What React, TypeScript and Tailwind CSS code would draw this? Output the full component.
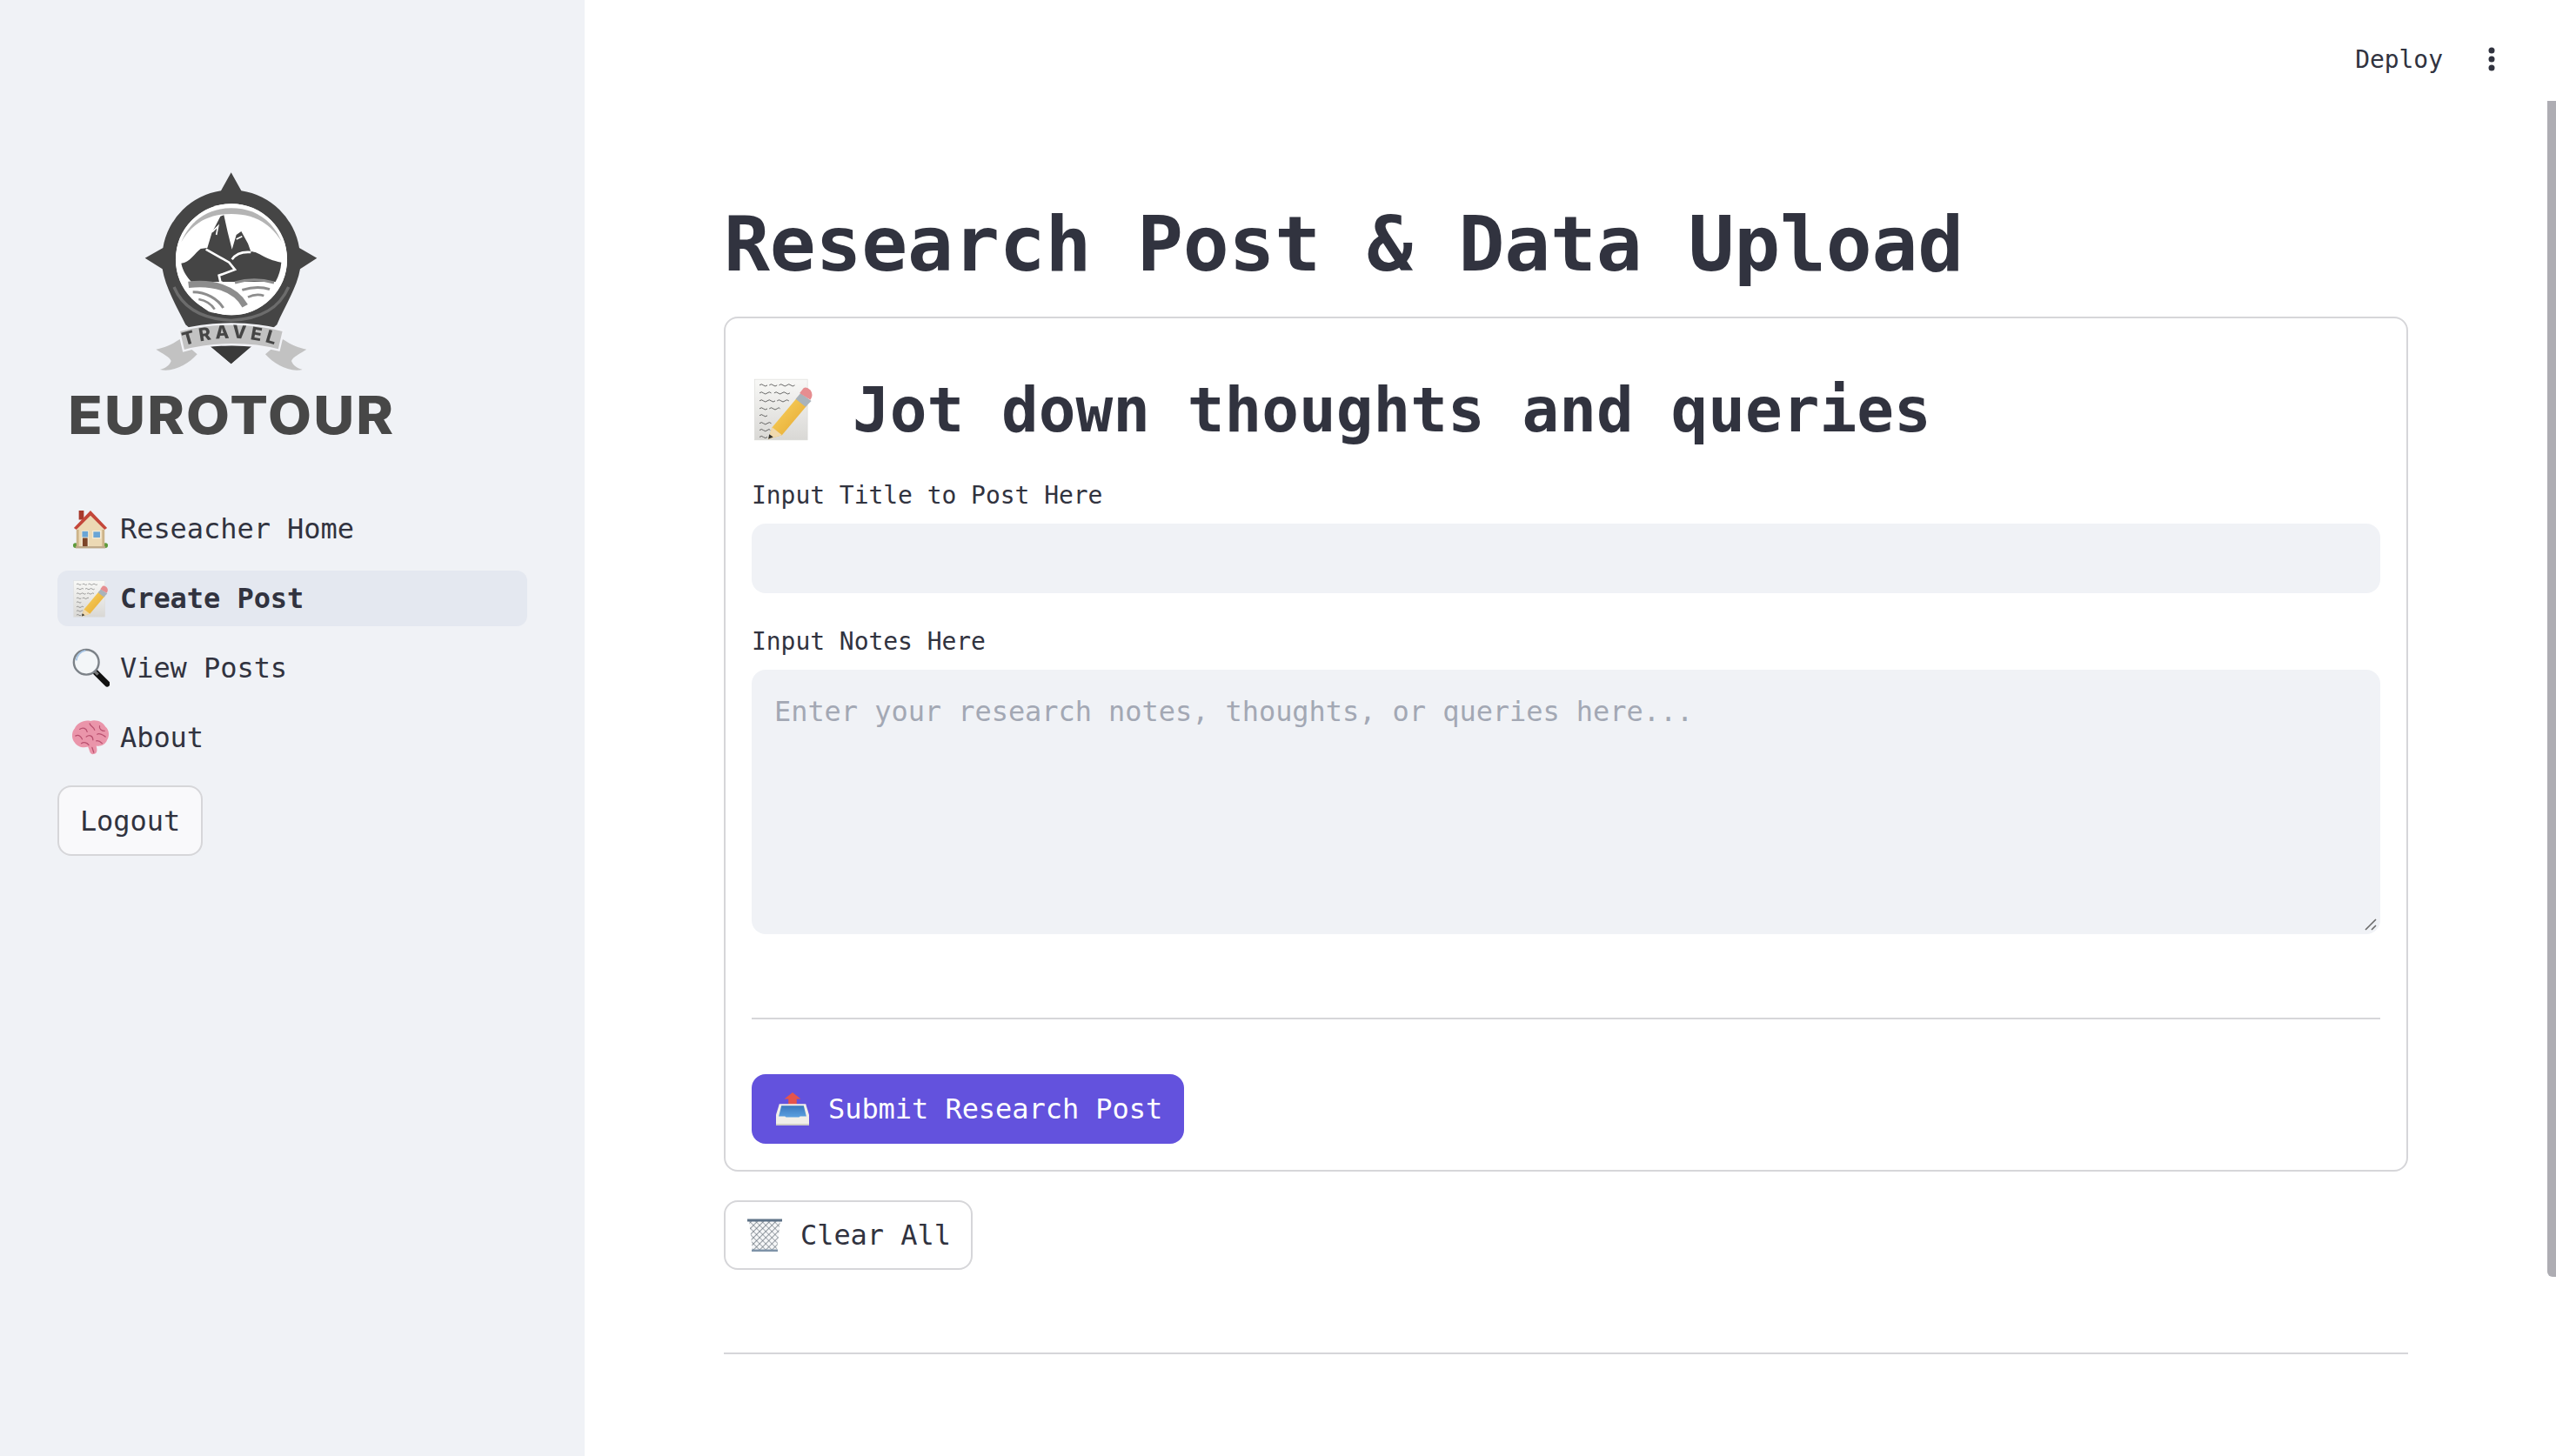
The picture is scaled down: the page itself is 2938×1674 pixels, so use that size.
import React from 'react';

function HouseEmoji({ className }: { className?: string }) {
  return (
    <svg viewBox="0 0 44 48" className={className}>
      <rect x="8" y="2" width="6" height="11" fill="#a8392c" />
      <circle cx="4" cy="44" r="3" fill="#5c9a3a" />
      <circle cx="40" cy="44" r="3" fill="#5c9a3a" />
      <path d="M6 23 L22 7 L38 23 V46 H6 Z" fill="#ecd9b4" />
      <path d="M2 23 L22 2 L42 23 L39 25 L22 8 L5 25 Z" fill="#c4473a" />
      <rect x="5" y="25" width="3" height="20" fill="#cdb48a" />
      <rect x="36" y="25" width="3" height="20" fill="#cdb48a" />
      <rect x="11" y="26" width="9" height="20" fill="#f4ead4" />
      <rect x="12" y="27" width="7" height="7" fill="#6aa5d6" />
      <rect x="12.5" y="35" width="6" height="11" fill="#7d4528" />
      <rect x="24" y="26" width="11" height="10" fill="#f4ead4" />
      <rect x="25.5" y="27.5" width="8" height="7" fill="#6aa5d6" />
      <rect x="4" y="45" width="36" height="2.5" fill="#bfa988" />
    </svg>
  );
}

function MemoEmoji({ className }: { className?: string }) {
  return (
    <svg viewBox="0 0 60 64" className={className}>
      <defs>
        <linearGradient id="memoPage" x1="0" y1="0" x2="0" y2="1">
          <stop offset="0" stopColor="#f8f8f6" />
          <stop offset="1" stopColor="#d9d8d5" />
        </linearGradient>
        <linearGradient id="memoPencil" x1="0" y1="0" x2="1" y2="1">
          <stop offset="0" stopColor="#fbd866" />
          <stop offset="1" stopColor="#e3a32b" />
        </linearGradient>
      </defs>
      <rect x="1" y="1" width="54" height="62" fill="url(#memoPage)" stroke="#d8d8d4" strokeWidth="0.5" />
      <g stroke="#3d3d3d" strokeWidth="0.8" fill="none" opacity="0.85">
        <path d="M6 7 q2 -2 4 0 t4 0 m2 0 q2 -2 4 0 t4 0 m2 0 q2 -2 4 0 t4 0 t4 0 t4 0" />
        <path d="M6 15 q2 -2 4 0 t4 0 t4 0 m3 0 q2 -2 4 0 t4 0 t4 0 t4 0" />
        <path d="M6 23 q2 -2 4 0 t4 0 t4 0 t4 0 m2 0 q2 -2 4 0 t4 0 t4 0" />
        <path d="M6 31 q2 -2 4 0 t4 0 m2 0 q2 -2 4 0 t4 0 t3 0" />
        <path d="M6 38 q2 -2 4 0 t4 0" />
        <path d="M6 46 q2 -2 4 0 t4 0 t4 0" />
        <path d="M6 53 q2 -2 4 0 t4 0 t3 0" />
        <path d="M6 60 q2 -2 4 0 t4 0" />
      </g>
      <path d="M15 62 L19 50 L45 19 L55 27 L29 58 Z" fill="url(#memoPencil)" />
      <path d="M15 62 L19 50 L29 58 Z" fill="#f0d9ae" />
      <path d="M15 62 L16 57 L20 60 Z" fill="#333" />
      <path d="M43 21 L48 15 L59 23 L53 29 Z" fill="#a9b3ba" />
      <path d="M47 15 L51 10 Q54 8 58 12 Q61 16 59 20 L58 22 Z" fill="#e68d90" />
    </svg>
  );
}

function SearchEmoji({ className }: { className?: string }) {
  return (
    <svg viewBox="0 0 46 50" className={className}>
      <path d="M28 29 L43 44" stroke="#111" strokeWidth="7" strokeLinecap="round" />
      <path d="M26 27 L32 33" stroke="#777" strokeWidth="3.5" />
      <circle cx="18" cy="18" r="15" fill="#f3f6f8" stroke="#7c8288" strokeWidth="2.5" />
      <path d="M6 16 A13 13 0 0 1 17 4" stroke="#a7c6e6" strokeWidth="2" fill="none" />
    </svg>
  );
}

function BrainEmoji({ className }: { className?: string }) {
  return (
    <svg viewBox="0 0 46 44" className={className}>
      <path d="M23 2 C30 0 38 3 41 9 C46 13 46 21 43 25 C41 31 35 33 30 32 C31 36 32 41 27 42 C22 43 22 37 20 33 C14 35 7 33 4 28 C0 24 0 15 4 11 C7 4 16 0 23 2 Z" fill="#ea95aa" />
      <g stroke="#b9506f" strokeWidth="1.3" fill="none" strokeLinecap="round">
        <path d="M10 12 C14 9 18 11 19 15" />
        <path d="M22 5 C23 9 27 9 28 13" />
        <path d="M34 8 C33 12 37 14 40 14" />
        <path d="M5 20 C9 18 12 21 13 24" />
        <path d="M18 21 C22 18 26 20 26 25" />
        <path d="M31 18 C34 16 38 19 41 21" />
        <path d="M12 29 C15 27 19 28 21 31" />
        <path d="M30 26 C33 25 35 27 37 29" />
        <path d="M25 34 L27 40" />
      </g>
    </svg>
  );
}

function OutboxEmoji({ className }: { className?: string }) {
  return (
    <svg viewBox="0 0 40 40" className={className}>
      <defs>
        <linearGradient id="outboxTray" x1="0" y1="0" x2="0" y2="1">
          <stop offset="0" stopColor="#3a78bd" />
          <stop offset="1" stopColor="#5aa0e0" />
        </linearGradient>
      </defs>
      <path d="M20 0 L30 8 H25 V16 H15 V8 H10 Z" fill="#e5544b" />
      <path d="M4 14 H36 L40 27 V40 H0 V27 Z" fill="#f1efe9" />
      <path d="M6.5 16 H33.5 L37 30 H3 Z" fill="url(#outboxTray)" />
      <path d="M0 29 H11 C14 35 26 35 29 29 H40 V40 H0 Z" fill="#f1efe9" />
      <rect x="0" y="38" width="40" height="2" fill="#cfcdc6" />
    </svg>
  );
}

function TrashEmoji({ className }: { className?: string }) {
  return (
    <svg viewBox="0 0 40 38" className={className}>
      <defs>
        <pattern id="trashMesh" width="5" height="5" patternUnits="userSpaceOnUse" patternTransform="rotate(45)">
          <path d="M0 0H5M0 0V5" stroke="#55606b" strokeWidth="1.2" fill="none" />
        </pattern>
      </defs>
      <path d="M2 2 H38 L34 37 H6 Z" fill="#f6f7f8" />
      <path d="M2 2 H38 L34 37 H6 Z" fill="url(#trashMesh)" />
      <rect x="0" y="0.5" width="40" height="3" fill="#5f7388" />
      <rect x="5" y="35.5" width="30" height="2.5" fill="#7e93a8" />
    </svg>
  );
}

function Logo() {
  return (
    <svg viewBox="0 0 1380 1080" className="w-[460px] h-[360px] ml-[40px] shrink-0 blur-[0.6px]">
      {/* compass pin */}
      <path
        d="M677 85 L712 148 A238 238 0 0 1 912 345 L973 380 L915 418 C905 480 860 550 835 610 L677 745 L520 610 C490 550 450 480 440 418 L380 380 L442 345 A238 238 0 0 1 642 148 Z"
        fill="#454545"
      />
      <path d="M480 480 C510 550 570 590 677 595 C785 590 845 550 875 480" stroke="#6c6c6c" strokeWidth="10" fill="none" />
      <circle cx="678" cy="385" r="192" fill="#ffffff" />
      <path d="M505 325 C540 240 610 208 678 208 C750 208 815 240 852 325 C810 255 750 228 678 228 C605 228 545 255 505 325 Z" fill="#b4b4b4" />
      {/* mountains */}
      <path
        d="M505 398 C535 395 550 365 572 348 L595 345 L610 295 L640 236 L652 232 L665 290 L680 350 L695 300 L712 288 L735 330 L745 358 C775 358 790 385 850 395 C848 420 842 440 830 462 L540 462 C525 445 510 425 505 398 Z"
        fill="#454545"
      />
      <path d="M612 290 L632 270 L626 300" stroke="#ffffff" strokeWidth="5" fill="none" />
      <path d="M695 315 L715 305" stroke="#ffffff" strokeWidth="5" fill="none" />
      {/* river */}
      <path d="M590 350 L670 395 L690 420 L635 440 L640 462 L660 472 M680 385 C695 362 720 358 745 360" stroke="#ffffff" strokeWidth="8" fill="none" />
      {/* fields */}
      <path d="M530 462 C600 455 680 470 730 530 L720 555 C690 570 640 578 600 565 C560 540 535 500 530 462 Z" fill="#ffffff" />
      <path d="M530 472 C610 462 690 482 725 545" stroke="#8d8d8d" strokeWidth="22" fill="none" />
      <path d="M545 497 C590 497 630 520 650 552" stroke="#8d8d8d" strokeWidth="9" fill="none" />
      <path d="M565 522 C590 527 610 540 620 557" stroke="#8d8d8d" strokeWidth="8" fill="none" />
      <path d="M690 465 C740 450 790 455 825 465" stroke="#8d8d8d" strokeWidth="9" fill="none" />
      <path d="M715 490 C750 480 785 480 810 488" stroke="#8d8d8d" strokeWidth="9" fill="none" />
      <path d="M735 515 C755 505 775 505 790 510" stroke="#8d8d8d" strokeWidth="8" fill="none" />
      <circle cx="678" cy="385" r="188" fill="none" stroke="#ffffff" strokeWidth="8" />
      {/* ribbon */}
      <path d="M500 660 C470 680 445 690 418 695 C440 710 465 720 470 735 C465 750 450 760 432 765 C480 775 530 745 560 712 Z" fill="#c2c2c2" />
      <path d="M855 660 C885 680 910 690 937 695 C915 710 890 720 885 735 C890 750 905 760 923 765 C875 775 825 745 795 712 Z" fill="#c2c2c2" />
      <path d="M600 680 C650 672 705 672 750 680 L677 745 Z" fill="#3a3a3a" />
      <path d="M497 630 C610 600 745 600 858 630 L842 698 C740 672 615 672 513 700 Z" fill="#c2c2c2" stroke="#f2f3f7" strokeWidth="7" />
      <path id="logoBand" d="M520 682 C620 648 735 648 835 682" fill="none" />
      <text fontFamily="Inter, sans-serif" fontWeight="800" fontSize="62" fill="#454545" letterSpacing="14" textAnchor="middle">
        <textPath href="#logoBand" startOffset="50%">TRAVEL</textPath>
      </text>
      {/* wordmark */}
      <text
        x="115"
        y="988"
        fontFamily="Inter, sans-serif"
        fontWeight="800"
        fontSize="180"
        fill="#474747"
        letterSpacing="6"
        textLength="1128"
        lengthAdjust="spacingAndGlyphs"
      >
        EUROTOUR
      </text>
    </svg>
  );
}

function NavItem({ icon, label, active }: { icon: React.ReactNode; label: string; active?: boolean }) {
  return (
    <div className={`h-[64px] rounded-[12px] flex items-center pl-[16px] ${active ? 'bg-[#e4e8f0] font-bold' : ''}`}>
      <span className="w-[44px] h-[48px] flex items-center justify-center shrink-0">{icon}</span>
      <span className="ml-[12px]">{label}</span>
    </div>
  );
}

export default function App() {
  return (
    <div className="relative flex h-screen overflow-hidden bg-white text-[#31333f] text-[32px] tracking-[-0.06px] font-['DejaVu_Sans_Mono',monospace]">
      {/* Sidebar */}
      <aside className="w-[672px] shrink-0 bg-[#f0f2f6] pt-[170px]">
        <Logo />
        <nav className="mt-[46px] ml-[66px] w-[540px] flex flex-col gap-[16px]">
          <NavItem icon={<HouseEmoji className="w-[42px] h-[46px]" />} label="Reseacher Home" />
          <NavItem icon={<MemoEmoji className="w-[40px] h-[43px]" />} label="Create Post" active />
          <NavItem icon={<SearchEmoji className="w-[44px] h-[48px]" />} label="View Posts" />
          <NavItem icon={<BrainEmoji className="w-[44px] h-[42px]" />} label="About" />
        </nav>
        <button className="mt-[23px] ml-[66px] w-[167px] h-[81px] rounded-[16px] border-2 border-[#d6d6d9] bg-[#f9f9fb]">
          Logout
        </button>
      </aside>

      {/* Main */}
      <main className="flex-1 min-w-0 pl-[160px] pr-[170px]">
        <header className="h-[136px] flex items-center justify-end text-[28px] tracking-[-0.05px] -mr-[100px]">
          <span className="pt-[2px]">Deploy</span>
          <svg viewBox="0 0 8 28" className="w-[8px] h-[28px] ml-[52px]">
            <circle cx="4" cy="4" r="3.5" fill="#31333f" />
            <circle cx="4" cy="14" r="3.5" fill="#31333f" />
            <circle cx="4" cy="24" r="3.5" fill="#31333f" />
          </svg>
        </header>

        <h1 className="h-[228px] pt-[62px] flex items-center text-[88px] tracking-[-0.2px] font-bold whitespace-nowrap">
          Research Post &amp; Data Upload
        </h1>

        <section className="h-[983px] border-2 border-[#d6d6d9] rounded-[16px] px-[30px]">
          <div className="mt-[46px] h-[120px] flex items-center text-[71px] tracking-normal font-bold whitespace-nowrap">
            <MemoEmoji className="ml-[2px] w-[68px] h-[72px] mr-[46px] mb-[2px]" />
            Jot down thoughts and queries
          </div>
          <label className="block mt-[18px] h-[40px] leading-[40px] text-[28px] tracking-[-0.05px]">Input Title to Post Here</label>
          <input className="block mt-[12px] w-full h-[80px] rounded-[16px] bg-[#f0f2f6] px-[26px] outline-none" />
          <label className="block mt-[36px] h-[40px] leading-[40px] text-[28px] tracking-[-0.05px]">Input Notes Here</label>
          <div className="relative mt-[12px]">
            <textarea
              className="block w-full h-[304px] rounded-[16px] bg-[#f0f2f6] px-[26px] pt-[24px] outline-none resize-none placeholder:text-[#a3a8b4]"
              placeholder="Enter your research notes, thoughts, or queries here..."
            />
            <svg viewBox="0 0 14 14" className="absolute right-[4px] bottom-[4px] w-[14px] h-[14px]">
              <path d="M1 13 L13 1 M8 13 L13 8" stroke="#6b6b6b" strokeWidth="1.6" fill="none" />
            </svg>
          </div>
          <div className="mt-[96px] h-[2px] bg-[#d6d6d9]" />
          <button className="mt-[63px] w-[497px] h-[80px] rounded-[16px] bg-[#6352dd] text-white flex items-center pl-[28px]">
            <OutboxEmoji className="w-[38px] h-[40px] mr-[22px]" />
            Submit Research Post
          </button>
        </section>

        <button className="mt-[33px] w-[286px] h-[80px] rounded-[16px] border-2 border-[#d6d6d9] bg-white flex items-center pl-[25px]">
          <TrashEmoji className="w-[40px] h-[38px] mr-[21px]" />
          Clear All
        </button>

        <div className="mt-[95px] h-[2px] bg-[#d6d6d9]" />
      </main>

      {/* Scrollbar */}
      <div className="absolute right-0 top-[116px] w-[10px] h-[1352px] bg-[#aeadb3] rounded-bl-[6px]" />
    </div>
  );
}
